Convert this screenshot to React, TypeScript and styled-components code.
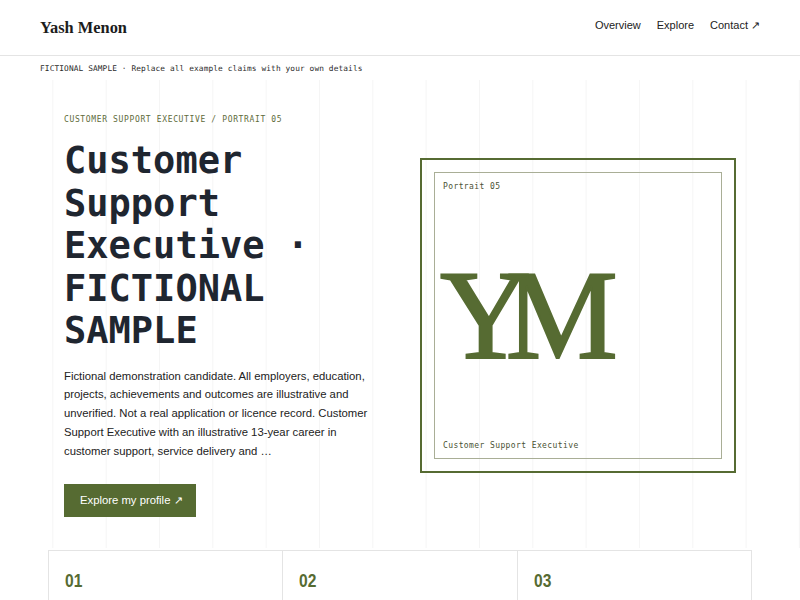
import React from 'react'
import styled, { createGlobalStyle } from 'styled-components'

const olive = '#566b32'
const ink = '#1f2630'

const GlobalStyle = createGlobalStyle`
  html, body {
    margin: 0;
    padding: 0;
    background: #ffffff;
    font-family: 'Liberation Sans', Arial, sans-serif;
    color: ${ink};
  }
  * { box-sizing: border-box; }
`

const Header = styled.header`
  height: 56px;
  padding: 0 40px;
  display: flex;
  align-items: center;
  justify-content: space-between;
  border-bottom: 1px solid #e4e4e4;
`

const Brand = styled.div`
  font-family: 'Liberation Serif', 'Times New Roman', serif;
  font-weight: 700;
  font-size: 16.4px;
  color: #1c1c1c;
`

const Nav = styled.nav`
  display: flex;
  gap: 16px;
  margin-top: -4px;
`

const NavLink = styled.a`
  font-size: 11px;
  color: #222;
  text-decoration: none;
`

const Notice = styled.div`
  height: 24px;
  padding: 0 40px;
  display: flex;
  align-items: center;
  font-family: 'DejaVu Sans Mono', 'Liberation Mono', monospace;
  font-size: 7.8px;
  letter-spacing: 0.12px;
  color: #2b2b2b;
`

const Hero = styled.section`
  height: 468px;
  padding: 34px 64px 33px;
  display: grid;
  grid-template-columns: 308px 316px;
  column-gap: 48px;
  align-items: center;
  background-image: linear-gradient(
    to right,
    transparent calc(100% - 1px),
    #f5f5f5 calc(100% - 1px)
  );
  background-size: calc(100% / 15) 100%;
`

const Intro = styled.div`
  align-self: start;
  display: flex;
  flex-direction: column;
  align-items: flex-start;
`

const Eyebrow = styled.div`
  font-family: 'DejaVu Sans Mono', 'Liberation Mono', monospace;
  font-size: 8px;
  letter-spacing: 0.08em;
  color: #5e6b3a;
  line-height: 12px;
  margin-bottom: 14px;
`

const Title = styled.h1`
  margin: 0 0 14px;
  font-family: 'DejaVu Sans Mono', 'Liberation Mono', monospace;
  font-weight: 700;
  font-size: 37px;
  line-height: 42.5px;
  color: ${ink};
`

const Lead = styled.p`
  margin: 0 0 24px;
  font-size: 11.3px;
  line-height: 18.8px;
  color: #222;
`

const Button = styled.a`
  display: inline-flex;
  align-items: center;
  height: 33px;
  padding: 0 13px 0 16px;
  background: ${olive};
  color: #ffffff;
  font-size: 11.3px;
  text-decoration: none;
`

const Frame = styled.div`
  width: 316px;
  height: 315px;
  border: 2px solid ${olive};
  padding: 12px;
`

const FrameInner = styled.div`
  height: 100%;
  border: 1px solid #a9ae96;
  padding: 9px 8px 7px;
  display: flex;
  flex-direction: column;
  justify-content: space-between;
`

const FrameLabel = styled.div`
  font-family: 'DejaVu Sans Mono', 'Liberation Mono', monospace;
  font-size: 8px;
  letter-spacing: 0.05em;
  line-height: 10px;
  color: #4a5233;
`

const Monogram = styled.div`
  font-family: 'Liberation Serif', 'Times New Roman', serif;
  font-weight: 400;
  font-size: 126px;
  line-height: 1;
  letter-spacing: -0.2em;
  color: ${olive};
  margin-left: -3px;
  margin-top: -1px;
  -webkit-text-stroke: 2px ${olive};
`

const Cards = styled.section`
  margin: 2px 48px 0;
  display: grid;
  grid-template-columns: repeat(3, 1fr);
  border-top: 1px solid #e4e4e4;
  border-right: 1px solid #e4e4e4;
`

const Card = styled.div`
  height: 60px;
  padding: 20px 16px 0;
  border-left: 1px solid #e4e4e4;
`

const CardNumber = styled.div`
  display: inline-block;
  font-family: 'Liberation Sans', Arial, sans-serif;
  font-weight: 700;
  font-size: 19px;
  line-height: 20px;
  color: ${olive};
  transform: scaleX(0.82);
  transform-origin: left center;
`

const App: React.FC = () => {
  return (
    <>
      <GlobalStyle />
      <Header>
        <Brand>Yash Menon</Brand>
        <Nav>
          <NavLink href="#overview">Overview</NavLink>
          <NavLink href="#explore">Explore</NavLink>
          <NavLink href="#contact">Contact ↗</NavLink>
        </Nav>
      </Header>
      <Notice>FICTIONAL SAMPLE · Replace all example claims with your own details</Notice>
      <Hero>
        <Intro>
          <Eyebrow>CUSTOMER SUPPORT EXECUTIVE / PORTRAIT 05</Eyebrow>
          <Title>Customer Support Executive · FICTIONAL SAMPLE</Title>
          <Lead>
            Fictional demonstration candidate. All employers, education, projects, achievements and
            outcomes are illustrative and unverified. Not a real application or licence record.
            Customer Support Executive with an illustrative 13-year career in customer support,
            service delivery and …
          </Lead>
          <Button href="#explore">Explore my profile ↗</Button>
        </Intro>
        <Frame>
          <FrameInner>
            <FrameLabel>Portrait 05</FrameLabel>
            <Monogram>YM</Monogram>
            <FrameLabel>Customer Support Executive</FrameLabel>
          </FrameInner>
        </Frame>
      </Hero>
      <Cards>
        {['01', '02', '03'].map((n) => (
          <Card key={n}>
            <CardNumber>{n}</CardNumber>
          </Card>
        ))}
      </Cards>
    </>
  )
}

export default App
